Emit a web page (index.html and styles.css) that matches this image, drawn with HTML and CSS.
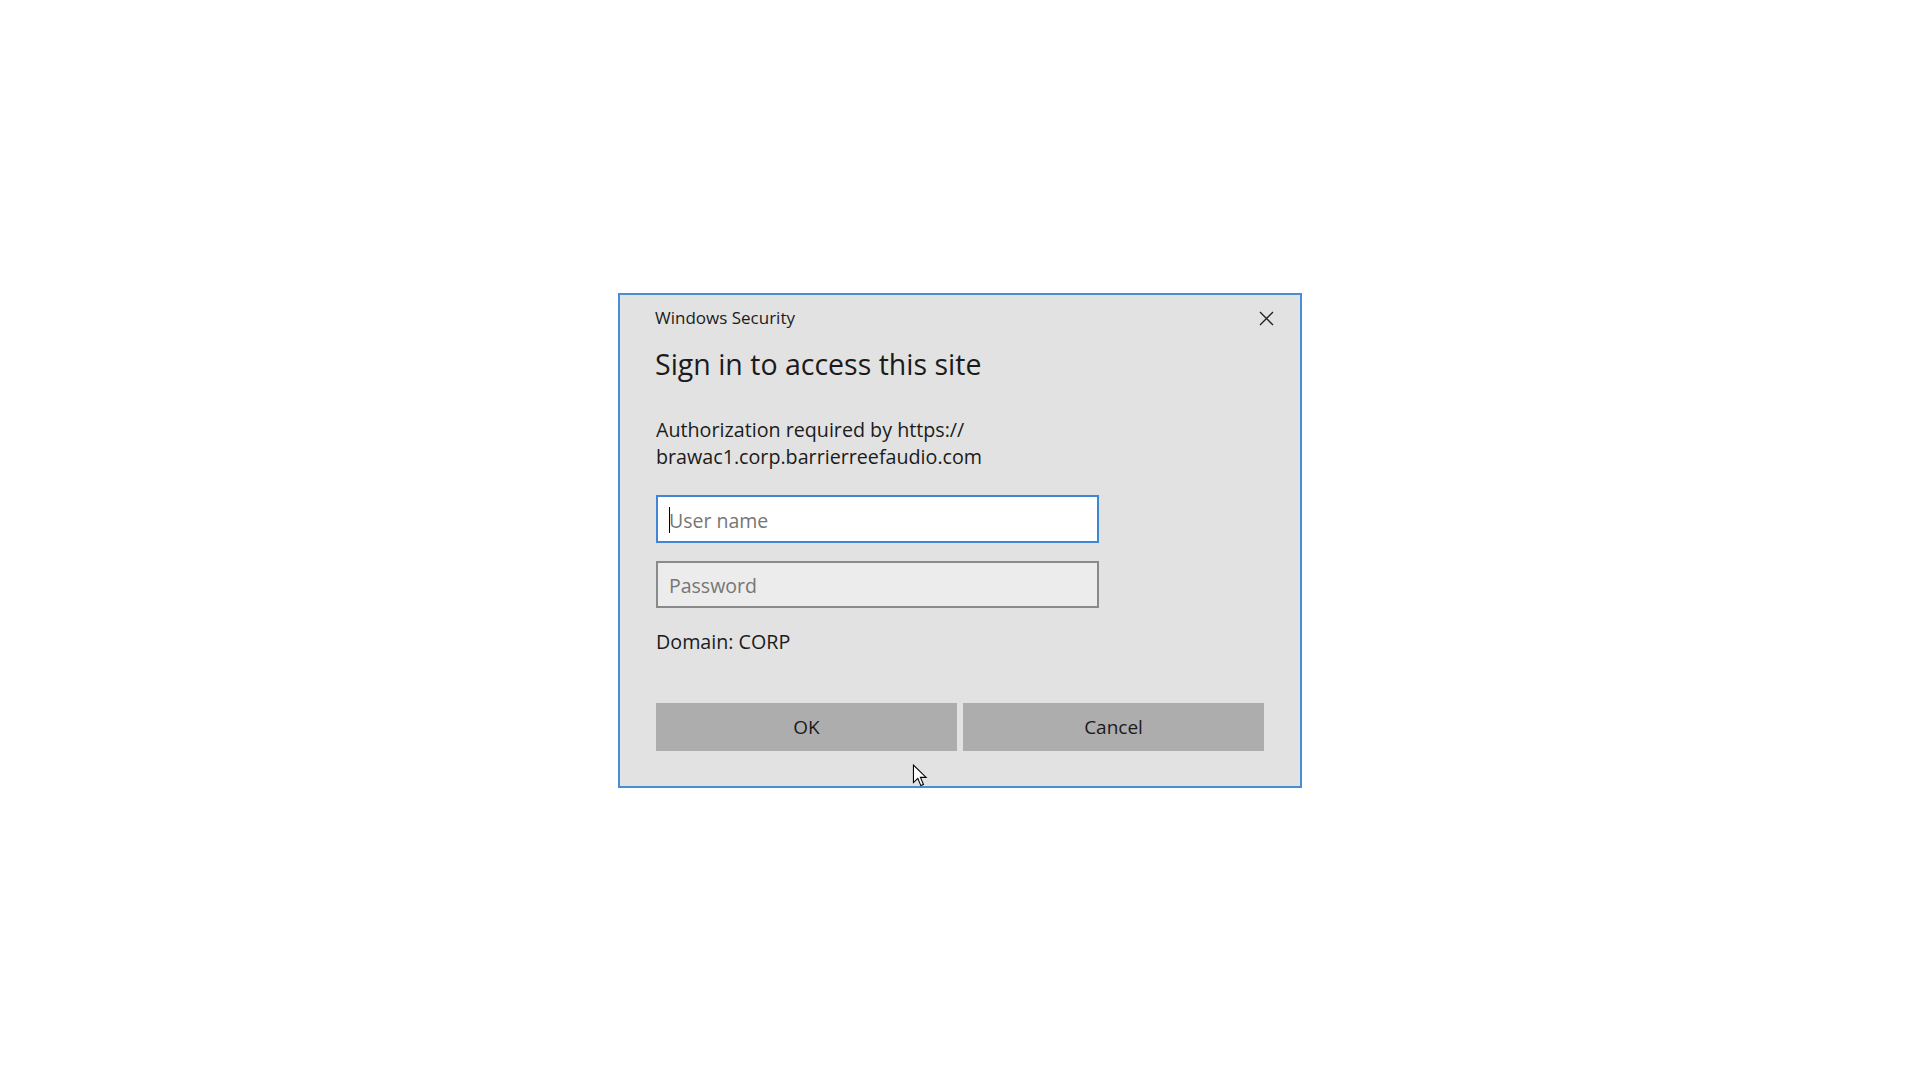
FILE: index.html
```html
<!DOCTYPE html>
<html lang="en">
<head>
<meta charset="utf-8">
<title>Windows Security</title>
<link rel="stylesheet" href="styles.css">
</head>
<body>
<div class="dialog">
  <div class="header">
    <span class="app-name">Windows Security</span>
    <svg class="close" width="15" height="15" viewBox="0 0 15 15"><path d="M1 1 L14 14 M14 1 L1 14" stroke="#1f1f1f" stroke-width="1.3" fill="none"/></svg>
  </div>
  <h1 class="title">Sign in to access this site</h1>
  <p class="desc">Authorization required by https://<br>brawac1.corp.barrierreefaudio.com</p>
  <div class="field field-focus"><span class="caret"></span><input class="input" type="text" placeholder="User name"></div>
  <div class="field field-pass"><input class="input" type="password" placeholder="Password"></div>
  <p class="domain">Domain: CORP</p>
  <div class="buttons">
    <button class="btn">OK</button>
    <button class="btn">Cancel</button>
  </div>
  <svg class="pointer" width="16" height="24" viewBox="0 0 14 22"><path d="M1 1 L1 17 L5 13.2 L7.8 19.8 L10.2 18.8 L7.4 12.3 L12.6 12.3 Z" fill="#fff" stroke="#000" stroke-width="1" stroke-linejoin="miter"/></svg>
</div>
</body>
</html>
```
FILE: styles.css
```css
html, body {
  margin: 0;
  padding: 0;
  background: #ffffff;
}
body {
  height: 100vh;
  display: flex;
  align-items: center;
  justify-content: center;
  font-family: "Open Sans", "Noto Sans", sans-serif;
  color: #1b1b1b;
}
.dialog {
  position: relative;
  box-sizing: border-box;
  width: 684px;
  height: 495px;
  background: #e2e2e2;
  border: 2px solid #4b8dd3;
  padding: 10px 36px 35px 36px;
  display: flex;
  flex-direction: column;
}
.header {
  display: flex;
  justify-content: space-between;
  align-items: center;
  height: 28px;
  margin-right: -10px;
}
.app-name {
  font-size: 17px;
  color: #1b1b1b;
  margin-left: -1px;
  margin-top: -2px;
}
.close {
  display: block;
}
.title {
  margin: 13px 0 0 -1px;
  font-size: 28.5px;
  font-weight: 400;
  line-height: 36px;
  color: #1b1b1b;
}
.desc {
  margin: 34px 0 0 0;
  font-size: 19.7px;
  line-height: 27px;
  color: #1b1b1b;
}
.field {
  position: relative;
  box-sizing: border-box;
  width: 443px;
  height: 48px;
  border: 2px solid #8a8a8a;
  background: #ececec;
}
.field-focus {
  margin-top: 25px;
  border-color: #3f86d6;
  background: #ffffff;
}
.field-pass {
  margin-top: 18px;
  height: 47px;
}
.input {
  box-sizing: border-box;
  width: 100%;
  height: 100%;
  border: 0;
  outline: none;
  background: transparent;
  padding: 3px 0 0 11px;
  font-family: "Open Sans", "Noto Sans", sans-serif;
  font-size: 19.5px;
  color: #1b1b1b;
}
.input::placeholder {
  color: #767676;
}
.caret {
  position: absolute;
  left: 11px;
  top: 10px;
  width: 1px;
  height: 26px;
  background: #000;
}
.domain {
  margin: 20px 0 0 0;
  font-size: 19.7px;
  line-height: 27px;
  color: #1b1b1b;
}
.buttons {
  margin-top: auto;
  display: flex;
  gap: 6px;
}
.btn {
  flex: 1;
  height: 48px;
  border: 0;
  background: #adadad;
  font-family: "Open Sans", "Noto Sans", sans-serif;
  font-size: 19px;
  color: #1b1b1b;
  padding: 0;
}
.pointer {
  position: absolute;
  left: 292px;
  top: 469px;
}
```
